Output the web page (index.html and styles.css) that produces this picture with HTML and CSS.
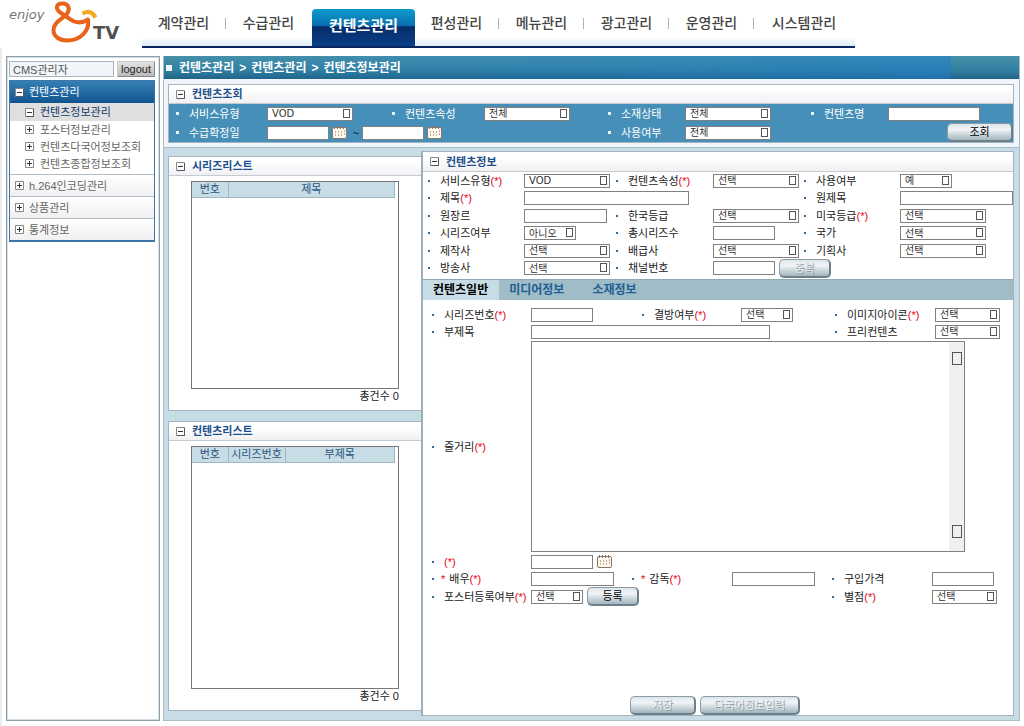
FILE: index.html
```html
<!DOCTYPE html>
<html lang="ko">
<head>
<meta charset="utf-8">
<meta name="viewport" content="width=device-width, initial-scale=1">
<title>컨텐츠정보관리</title>
<link rel="stylesheet" href="styles.css">
</head>
<body>
<svg class="defs" aria-hidden="true">
  <symbol id="minus" viewBox="0 0 9 9"><path d="M.5.5h8v8h-8z" fill="#fff" stroke="#888"/><path d="M8.500 1v7.500H1" fill="none" stroke="#555"/><path d="M2 4.500h5" stroke="#333"/></symbol>
  <symbol id="plus" viewBox="0 0 9 9"><path d="M.5.5h8v8h-8z" fill="#fff" stroke="#888"/><path d="M2 4.500h5M4.500 2v5" stroke="#333"/></symbol>
  <symbol id="cal" viewBox="0 0 15 13"><rect x=".5" y="1.500" width="14" height="11" rx="1.500" fill="#fffaf0" stroke="#8a7468"/><path d="M2.500 0v3M5.500 0v3M8.500 0v3M11.500 0v3" stroke="#8a7468"/><path d="M3.500 5v5M6.500 5v5M9.500 5v5M12.500 4v5" stroke="#c9ab98" stroke-dasharray="2 1"/></symbol>
</svg>

<header class="top">
  <a class="logo" href="#" aria-label="enjoy &amp;TV">
    <svg viewBox="0 0 142 48" width="142" height="48">
      <text x="9" y="19" class="logo-enjoy">enjoy</text>
      <path d="M88 19.500C82 23.500 75 23 69 18.500L59.500 12C55 8 56.500 3.500 62.500 3.500C69 3.500 70.500 9.500 66.500 14.500C62.500 19 53.500 22 53.500 30C53.500 36.500 59 40.500 67 40.500C80 40.500 90 31 88 19.500Z" fill="none" stroke="#e8641b" stroke-width="4" stroke-linejoin="round"/>
      <path d="M82.500 13.500Q91 9 95.500 17.500" fill="none" stroke="#f3a81e" stroke-width="4"/>
      <text x="93" y="39" class="logo-tv">TV</text>
    </svg>
  </a>
  <nav class="gnb">
    <a href="#">계약관리</a>
    <a href="#" class="plain">수급관리</a>
    <a href="#" class="on" aria-current="page">컨텐츠관리</a>
    <a href="#">편성관리</a>
    <a href="#">메뉴관리</a>
    <a href="#">광고관리</a>
    <a href="#">운영관리</a>
    <a href="#" class="plain">시스템관리</a>
  </nav>
</header>

<div class="workspace">
  <aside class="side">
    <div class="user">
      <input type="text" value="CMS관리자" aria-label="사용자" readonly>
      <button type="button">logout</button>
    </div>
    <nav class="menu">
      <a class="menu-head" href="#"><svg class="tog"><use href="#minus"/></svg>컨텐츠관리</a>
      <div class="menu-sub">
        <a class="cur" href="#"><svg class="tog"><use href="#minus"/></svg>컨텐츠정보관리</a>
        <a href="#"><svg class="tog"><use href="#plus"/></svg>포스터정보관리</a>
        <a href="#"><svg class="tog"><use href="#plus"/></svg>컨텐츠다국어정보조회</a>
        <a href="#"><svg class="tog"><use href="#plus"/></svg>컨텐츠종합정보조회</a>
      </div>
      <a class="menu-item" href="#"><svg class="tog"><use href="#plus"/></svg>h.264인코딩관리</a>
      <a class="menu-item" href="#"><svg class="tog"><use href="#plus"/></svg>상품관리</a>
      <a class="menu-item" href="#"><svg class="tog"><use href="#plus"/></svg>통계정보</a>
    </nav>
  </aside>

  <main class="main">
    <div class="crumb">컨텐츠관리 <span>&gt;</span> 컨텐츠관리 <span>&gt;</span> 컨텐츠정보관리</div>

    <div class="search-wrap">
      <section class="panel">
        <h2><svg class="tog"><use href="#minus"/></svg>컨텐츠조회</h2>
        <form class="search">
          <label for="s1">서비스유형</label>
          <span class="sel w86"><select id="s1"><option>VOD</option></select></span>
          <label for="s2">컨텐츠속성</label>
          <span class="sel w86"><select id="s2"><option>전체</option></select></span>
          <label for="s3">소재상태</label>
          <span class="sel w86"><select id="s3"><option>전체</option></select></span>
          <label for="s4">컨텐츠명</label>
          <input id="s4" class="w92" type="text">
          <label for="s5">수급확정일</label>
          <span class="range">
            <input id="s5" class="w61" type="text"><svg class="cal"><use href="#cal"/></svg><span class="tilde">~</span><input class="w61" type="text" aria-label="수급확정일 종료"><svg class="cal"><use href="#cal"/></svg>
          </span>
          <label class="c5" for="s6">사용여부</label>
          <span class="sel w86"><select id="s6"><option>전체</option></select></span>
          <button class="btn w66 c8" type="button">조회</button>
        </form>
      </section>
    </div>

    <div class="columns">
      <div class="lists">
        <section class="panel list">
          <h2><svg class="tog"><use href="#minus"/></svg>시리즈리스트</h2>
          <div class="box">
            <table><thead><tr><th class="no">번호</th><th>제목</th></tr></thead><tbody></tbody></table>
          </div>
          <p>총건수 0</p>
        </section>
        <section class="panel list">
          <h2><svg class="tog"><use href="#minus"/></svg>컨텐츠리스트</h2>
          <div class="box">
            <table><thead><tr><th class="no">번호</th><th class="ser">시리즈번호</th><th>부제목</th></tr></thead><tbody></tbody></table>
          </div>
          <p>총건수 0</p>
        </section>
      </div>

      <form class="panel detail">
        <h2><svg class="tog"><use href="#minus"/></svg>컨텐츠정보</h2>
        <div class="grid info">
          <label for="i1">서비스유형<i>(*)</i></label>
          <span class="sel w86"><select id="i1"><option>VOD</option></select></span>
          <label for="i2">컨텐츠속성<i>(*)</i></label>
          <span class="sel w86"><select id="i2"><option>선택</option></select></span>
          <label for="i3">사용여부</label>
          <span class="sel w52"><select id="i3"><option>예</option></select></span>

          <label for="i4">제목<i>(*)</i></label>
          <input id="i4" class="w165 wide" type="text">
          <label class="c5" for="i5">원제목</label>
          <input id="i5" class="full" type="text">

          <label for="i6">원장르</label>
          <input id="i6" class="w83" type="text">
          <label for="i7">한국등급</label>
          <span class="sel w86"><select id="i7"><option>선택</option></select></span>
          <label for="i8">미국등급<i>(*)</i></label>
          <span class="sel w86"><select id="i8"><option>선택</option></select></span>

          <label for="i9">시리즈여부</label>
          <span class="sel w52"><select id="i9"><option>아니오</option></select></span>
          <label for="i10">총시리즈수</label>
          <input id="i10" class="w61" type="text">
          <label for="i11">국가</label>
          <span class="sel w86"><select id="i11"><option>선택</option></select></span>

          <label for="i12">제작사</label>
          <span class="sel w86"><select id="i12"><option>선택</option></select></span>
          <label for="i13">배급사</label>
          <span class="sel w86"><select id="i13"><option>선택</option></select></span>
          <label for="i14">기획사</label>
          <span class="sel w86"><select id="i14"><option>선택</option></select></span>

          <label for="i15">방송사</label>
          <span class="sel w86"><select id="i15"><option>선택</option></select></span>
          <label for="i16">채널번호</label>
          <span class="pair to-end"><input id="i16" class="w61" type="text"><button class="btn w52" type="button" disabled>중복</button></span>
        </div>

        <div class="tabs" role="tablist">
          <button type="button" role="tab" aria-selected="true">컨텐츠일반</button>
          <button type="button" role="tab" aria-selected="false">미디어정보</button>
          <button type="button" role="tab" aria-selected="false">소재정보</button>
        </div>

        <div class="tabpane">
          <div class="grid general">
            <label for="g1">시리즈번호<i>(*)</i></label>
            <input id="g1" class="w61" type="text">
            <label for="g2">결방여부<i>(*)</i></label>
            <span class="sel w52"><select id="g2"><option>선택</option></select></span>
            <label for="g3">이미지아이콘<i>(*)</i></label>
            <span class="sel w65"><select id="g3"><option>선택</option></select></span>
            <label for="g4">부제목</label>
            <input id="g4" class="w238 wide" type="text">
            <label class="c5" for="g5">프리컨텐츠</label>
            <span class="sel w65"><select id="g5"><option>선택</option></select></span>
            <label for="g6">줄거리<i>(*)</i></label>
            <div class="story"><textarea id="g6"></textarea><span class="scroll"><b></b><b></b></span></div>
          </div>
          <div class="grid extra">
            <label for="e1"><i>(*)</i></label>
            <span class="pair"><input id="e1" class="w61" type="text"><svg class="cal"><use href="#cal"/></svg></span>
            <label class="c1 star" for="e2"><i>*</i>배우<i>(*)</i></label>
            <input id="e2" class="w83" type="text">
            <label class="star" for="e3"><i>*</i>감독<i>(*)</i></label>
            <input id="e3" class="w83" type="text">
            <label for="e4">구입가격</label>
            <input id="e4" class="w61" type="text">
            <label for="e5">포스터등록여부<i>(*)</i></label>
            <span class="pair wide"><span class="sel w52"><select id="e5"><option>선택</option></select></span><button class="btn w52" type="button">등록</button></span>
            <label class="c5" for="e6">별점<i>(*)</i></label>
            <span class="sel w65"><select id="e6"><option>선택</option></select></span>
          </div>
        </div>
        <div class="actions">
          <button class="btn w66" type="button" disabled>저장</button>
          <button class="btn w100" type="button" disabled>다국어정보입력</button>
        </div>
      </form>
    </div>
  </main>
</div>
</body>
</html>
```

FILE: styles.css
```css
*, *::before, *::after { box-sizing: border-box; }

body {
  margin: 0;
  min-height: 100vh;
  display: flex;
  flex-direction: column;
  background: #fff;
  color: #222;
  font: 11px/14px "Liberation Sans", "Noto Sans CJK KR", sans-serif;
}

a { color: inherit; text-decoration: none; }
i { color: #e60012; font-style: normal; }
input, select, textarea, button { font: inherit; color: inherit; margin: 0; }
.defs { display: none; }

/* header */
.top { display: flex; height: 48px; }
.logo { flex: none; width: 142px; }
.logo svg { display: block; }
.logo-enjoy { font: italic 13px "DejaVu Sans", sans-serif; fill: #777; }
.logo-tv { font: bold 18px "DejaVu Sans", sans-serif; fill: #505050; }

.gnb {
  display: grid;
  grid-template-columns: 85px 85px 103px repeat(4, 85px) 100px;
  border-bottom: 2px solid #0b2560;
  background: linear-gradient(#fff 80%, #dcecf6);
}
.gnb a {
  display: flex;
  align-items: center;
  justify-content: center;
  padding-right: 2px;
  font-size: 14px;
  font-weight: 500;
  color: #444;
}
.gnb a::after {
  content: "";
  width: 1px;
  height: 11px;
  margin: 0 -17px 0 16px;
  background: #9fb8c4;
}
.gnb a.plain::after, .gnb a.on::after { display: none; }
.gnb .on {
  margin-top: 9px;
  padding: 0 0 4px;
  border-radius: 4px 4px 0 0;
  background: linear-gradient(#0c9bcd, #0a6fae 45%, #072c68 48%, #0a3f87);
  color: #fff;
  font-size: 15px;
  font-weight: bold;
}

/* page frame */
.workspace {
  flex: 1;
  display: flex;
  gap: 3px;
  padding: 8px 4px 5px 4px;
  border-left: 2px solid #ececec;
}
.side {
  flex: none;
  width: 154px;
  padding: 4px 4px 4px 2px;
  border: 1px solid #8d9fab;
  box-shadow: inset 0 0 0 1px #d3dde4;
}
.user { display: flex; gap: 3px; margin-bottom: 3px; height: 16px; }
.user input {
  flex: 1;
  min-width: 0;
  padding: 0 3px;
  border: 1px solid #a9b4bc;
  background: #f1f5f9;
  color: #555;
}
.user input[type="text"] { height: 16px; }
.user button {
  width: 38px;
  padding: 0;
  border: 1px solid #999;
  border-color: #ccc #888 #888 #ccc;
  background: linear-gradient(#e4e4e4, #bbb);
  font-size: 11px;
  line-height: 12px;
}
.menu { border: 1px solid #3f76a8; border-bottom-width: 2px; color: #666; }
.menu a { display: flex; align-items: center; }
.tog { flex: none; width: 9px; height: 9px; }
.menu-head {
  gap: 5px;
  height: 22px;
  padding-left: 5px;
  background: linear-gradient(#3580b5, #10548f);
  color: #fff;
}
.menu-sub a { gap: 6px; height: 17px; padding-left: 15px; }
.menu-sub { padding-bottom: 2px; }
.menu-sub a.cur { height: 18px; background: #dfdfdf; color: #123a66; }
.menu-item {
  gap: 5px;
  height: 22px;
  padding-left: 5px;
  border-top: 1px solid #b3bec6;
  background: linear-gradient(#fff, #f0f0f2);
}

.main {
  flex: 1;
  min-width: 0;
  display: flex;
  flex-direction: column;
  border: 1px solid #a6bcc9;
  border-top: 0;
  background: #c8dce6;
}
.crumb {
  display: flex;
  align-items: center;
  gap: 5px;
  height: 23px;
  padding-left: 2px;
  background: linear-gradient(90deg, transparent, rgba(30, 125, 205, .5) 92%, transparent 92%), linear-gradient(#4690a8, #3381a2 60%, #1f6386);
  color: #fff;
  font-size: 12px;
  font-weight: bold;
}
.crumb::before { content: ""; width: 6px; height: 6px; margin-right: 2px; background: #eef6fa; }

.search-wrap { padding: 5px 5px 4px 4px; border-bottom: 1px solid #a6bcc9; background: #eff5fa; }
.panel { border: 1px solid #a3b4c0; background: #fff; }
.panel h2 {
  display: flex;
  align-items: center;
  gap: 7px;
  height: 19px;
  margin: 0;
  padding-left: 7px;
  border-bottom: 1px solid #c3ccd3;
  background: linear-gradient(#fff 30%, #f1eff2);
  color: #1c4f8c;
  font-size: 11px;
  line-height: 14px;
}

/* fields */
label { display: flex; align-items: center; white-space: nowrap; }
label::before { content: ""; flex: none; width: 2px; height: 2px; margin: 0 10px 0 2px; background: #2f6a9c; }
input[type="text"] { height: 14px; }
.search input, .grid input { padding: 0 3px; border: 1px solid #808080; border-radius: 0; background: #fff; }
.sel { display: inline-grid; height: 14px; }
.sel select, .sel::after { grid-area: 1 / 1; }
.sel select {
  appearance: none;
  width: 100%;
  height: 14px;
  padding: 0 4px;
  border: 1px solid #808080;
  border-radius: 0;
  background: #fff;
  color: #333;
  font: 10px/11px "DejaVu Sans", "Noto Sans CJK KR", sans-serif;
}
.sel::after {
  content: "";
  z-index: 1;
  align-self: start;
  justify-self: end;
  width: 7px;
  height: 9px;
  margin: 2px 3px 0 0;
  border: 1px solid #555;
  pointer-events: none;
}
.w52 { width: 52px; }
.w61 { width: 62px; }
.w65 { width: 65px; }
.w66 { width: 66px; }
.w83 { width: 83px; }
.w86 { width: 86px; }
.w92 { width: 92px; }
.w100 { width: 100px; }
.w165 { width: 165px; }
.w238 { width: 239px; }
.full { width: 100%; }
.c1 { grid-column: 1; }
.c5 { grid-column: 5; }
.c8 { grid-column: 8; justify-self: end; }
.wide { grid-column: 2 / span 3; }
.to-end { grid-column: 4 / -1; }

.cal { flex: none; width: 15px; height: 13px; }
.btn {
  height: 19px;
  padding: 0;
  border: 1px solid #8c9ca5;
  border-right: 2px solid #6d7f89;
  border-bottom: 2px solid #6d7f89;
  border-radius: 5px;
  background: linear-gradient(#dde5ea, #f0f4f6 35%, #a3b5bf);
  color: #000;
  font-size: 11px;
  line-height: 14px;
}
.btn:disabled { color: #e9eef0; text-shadow: 1px 1px 0 #8999a2; }

.search {
  display: grid;
  grid-template-columns: 93fr 123fr 94fr 122fr 79fr 124fr 79fr 125fr;
  grid-template-rows: 19px 19px;
  align-items: center;
  padding-left: 5px;
  background: #468fb9;
  color: #fff;
}
.search label::before { width: 3px; height: 3px; background: #e8f4fa; }
.search .sel, .search input { color: #333; }
.range { display: flex; align-items: center; grid-column: 2 / span 3; }
.range .cal { margin: 0 3px; }
.tilde { width: 12px; text-align: center; color: #0d3a5c; font-weight: bold; }

/* list column */
.columns { flex: 1; display: flex; padding: 0 5px 4px 4px; }
.lists {
  flex: none;
  width: 253px;
  display: grid;
  grid-template-rows: 255fr 290fr;
  gap: 10px;
  padding: 8px 0 5px;
}
.list { display: flex; flex-direction: column; border-right: 0; }
.box { flex: 1; margin: 5px 22px 0; border: 1px solid #777; padding-right: 3px; }
.box table { width: 100%; border-collapse: collapse; table-layout: fixed; }
.box th {
  height: 15px;
  padding: 0;
  border-right: 1px solid #9fb6c3;
  border-bottom: 1px solid #9fb6c3;
  background: #c8dce6;
  color: #285680;
  font-weight: normal;
  line-height: 14px;
  white-space: nowrap;
}
.box .no { width: 36px; }
.box .ser { width: 57px; }
.list p { margin: 0 22px 7px; text-align: right; line-height: 14px; }

/* detail form */
.detail { flex: 1; min-width: 0; display: flex; flex-direction: column; margin-top: 3px; border-left: 2px solid #9bb0bb; }
.detail h2 { height: 20px; }
.grid { display: grid; align-items: center; }
.info {
  grid-template-columns: 98fr 90fr 99fr 89fr 98fr 113fr;
  grid-template-rows: repeat(3, 17px 18px);
  padding: 0 0 2px 3px;
}
.pair { display: flex; align-items: center; gap: 4px; }
.tabs { display: flex; height: 21px; border-top: 1px solid #8ea9b5; background: #a0bcc6; }
.tabs button {
  padding: 0 11px 0 10px;
  border: 0;
  background: none;
  color: #1d5f93;
  font-size: 12px;
  font-weight: bold;
}
.tabs button + button { padding-right: 18px; }
.tabs button[aria-selected="true"] { background: #c8dce6; color: #000; }
.tabpane { padding: 6px 0 0 7px; }
.general {
  grid-template-columns: 101fr 109fr 101fr 92fr 102fr 78fr;
  grid-template-rows: 17px 17px auto;
}
.story {
  grid-column: 2 / span 5;
  display: flex;
  height: 211px;
  margin: 1px 48px 1px 0;
  border: 1px solid #808080;
}
.story textarea { flex: 1; min-width: 0; padding: 2px; border: 0; outline: 0; resize: none; background: #fff; }
.scroll {
  display: flex;
  flex-direction: column;
  justify-content: space-between;
  width: 15px;
  padding: 10px 2px 13px 3px;
  background: #f0f0f0;
}
.scroll b { height: 13px; border: 1px solid #555; }
.extra {
  grid-template-columns: 101fr 99fr 102fr 98fr 102fr 81fr;
  grid-template-rows: 17px 17px 19px;
}
.star::before { margin-right: 7px; }
.star i:first-of-type { margin-right: 4px; }
.actions { display: flex; justify-content: center; gap: 4px; margin-top: auto; padding-right: 6px; }
```
